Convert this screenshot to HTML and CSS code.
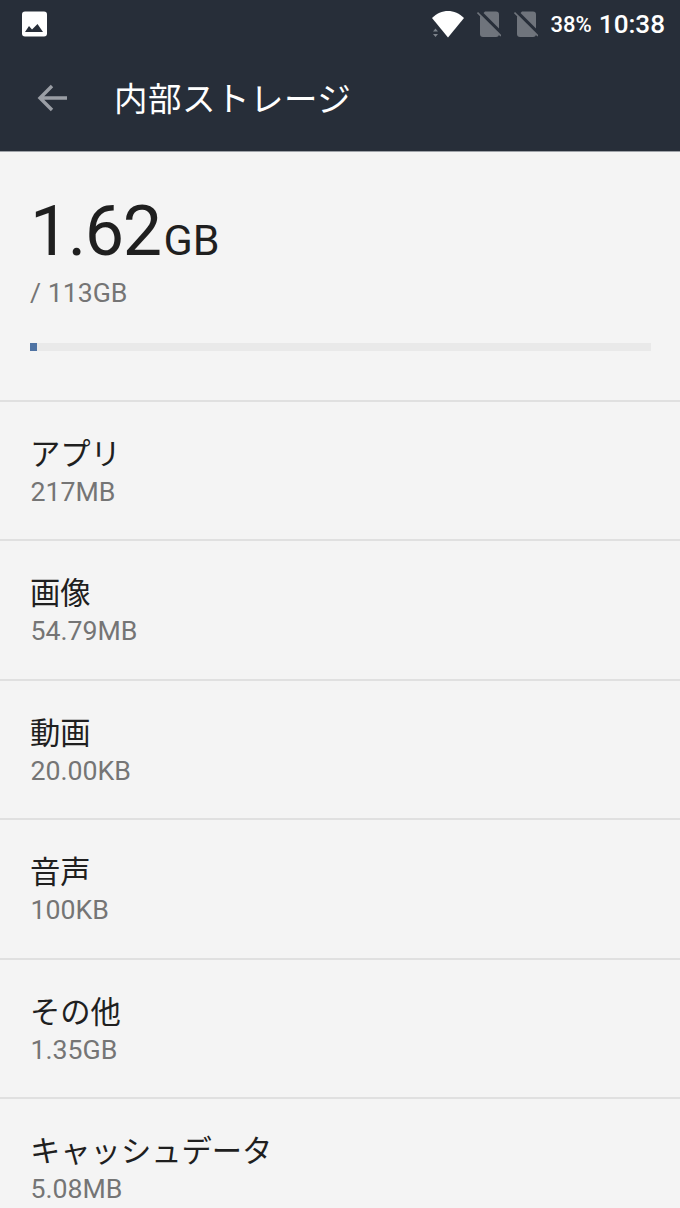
FILE: index.html
```html
<!DOCTYPE html>
<html lang="ja">
<head>
  <meta charset="UTF-8" />
  <meta name="viewport" content="width=device-width, initial-scale=1.0"/>
  <title>内部ストレージ</title>
  <link rel="stylesheet" href="styles.css">
</head>
<body>
  <div class="header">
    <div class="status-bar">
      <svg class="status-photo" width="25" height="26" viewBox="0 0 25 26">
        <rect x="0" y="0.5" width="25" height="25" rx="3" fill="#fff"/>
        <path d="M3 21 L7 15 L10 18.5 L15.5 13 L21 21 Z" fill="#272e39"/>
      </svg>
      <div class="status-right">
        <svg class="status-wifi" width="34" height="28" viewBox="0 0 34 28">
          <path d="M1 8 C10 -1.5 24 -1.5 33 8 L17 27.5 Z" fill="#fff"/>
          <path d="M2 21.5 L4.5 18.5 L7 21.5 Z M2 24 L7 24 L4.5 27 Z" fill="#7d838b"/>
        </svg>
        <svg class="status-sim" width="24" height="28" viewBox="0 0 24 28">
          <path d="M8 1.5 H19 Q22 1.5 22 4.5 V24 Q22 27 19 27 H6 Q3 27 3 24 V6.5 Z" fill="#6f747c"/>
          <path d="M2 1 L26 25" stroke="#272e39" stroke-width="3.5"/>
          <path d="M0.5 2.5 L24 26" stroke="#6f747c" stroke-width="1.6"/>
        </svg>
        <svg class="status-sim" width="24" height="28" viewBox="0 0 24 28">
          <path d="M8 1.5 H19 Q22 1.5 22 4.5 V24 Q22 27 19 27 H6 Q3 27 3 24 V6.5 Z" fill="#6f747c"/>
          <path d="M2 1 L26 25" stroke="#272e39" stroke-width="3.5"/>
          <path d="M0.5 2.5 L24 26" stroke="#6f747c" stroke-width="1.6"/>
        </svg>
        <span class="status-battery">38%</span>
        <span class="status-time">10:38</span>
      </div>
    </div>
    <div class="toolbar">
      <svg class="back" width="32" height="30" viewBox="0 0 32 30">
        <path d="M30 15 H3 M15 3 L3 15 L15 27" fill="none" stroke="#9a9ea5" stroke-width="3.4"/>
      </svg>
      <h1>内部ストレージ</h1>
    </div>
  </div>

  <div class="summary">
    <div class="used"><span class="used-num">1.62</span><span class="used-unit">GB</span></div>
    <div class="total">/ 113GB</div>
    <div class="bar"><div class="bar-fill" style="width: 1.1%"></div></div>
  </div>

  <div class="list">
    <div class="row"><div class="row-title">アプリ</div><div class="row-size">217MB</div></div>
    <div class="row"><div class="row-title">画像</div><div class="row-size">54.79MB</div></div>
    <div class="row"><div class="row-title">動画</div><div class="row-size">20.00KB</div></div>
    <div class="row"><div class="row-title">音声</div><div class="row-size">100KB</div></div>
    <div class="row"><div class="row-title">その他</div><div class="row-size">1.35GB</div></div>
    <div class="row"><div class="row-title">キャッシュデータ</div><div class="row-size">5.08MB</div></div>
  </div>
</body>
</html>
```

FILE: styles.css
```css
html, body {
  height: 100%;
}
body {
  margin: 0;
  overflow: hidden;
  background: #f4f4f4;
  color: #1f1f1f;
  font-family: Roboto, "Noto Sans CJK JP", sans-serif;
}
.header {
  height: 151px;
  background: #272e39;
  border-bottom: 1px solid #9ea2a8;
  color: white;
}
.status-bar {
  display: flex;
  justify-content: space-between;
  align-items: center;
  height: 48px;
  padding: 0 15px 0 22px;
}
.status-right {
  display: flex;
  align-items: center;
}
.status-wifi {
  margin-right: 12px;
}
.status-sim {
  margin-right: 13px;
}
.status-battery {
  margin-right: 7px;
  font-size: 22px;
  font-weight: 500;
}
.status-time {
  font-size: 26.1px;
  font-weight: 500;
}
.toolbar {
  display: flex;
  align-items: center;
  height: 100px;
  padding-left: 37px;
}
.back {
  margin-right: 45px;
}
.toolbar h1 {
  margin: -3px 0 0;
  font-size: 33.5px;
  font-weight: 400;
  letter-spacing: 0.5px;
}
.summary {
  height: 248px;
  padding: 0 29px 0 30px;
  box-sizing: border-box;
}
.used {
  padding-top: 37px;
  line-height: 84px;
}
.used-num {
  font-size: 70px;
  letter-spacing: -1.5px;
}
.used-unit {
  font-size: 43px;
  margin-left: 3px;
}
.total {
  margin-top: -17px;
  font-size: 26.7px;
  line-height: 36px;
  color: #757575;
}
.bar {
  margin-top: 32px;
  height: 8px;
  background: #e9e9e9;
}
.bar-fill {
  height: 8px;
  background: #4f73a3;
}
.row {
  box-sizing: border-box;
  height: 139.4px;
  padding: 32px 30px 0 30px;
  border-top: 2px solid #e0e0e0;
}
.row-title {
  font-size: 30.3px;
  line-height: 42px;
}
.row-size {
  padding-left: 0.5px;
  font-size: 26.7px;
  line-height: 32px;
  color: #757575;
}
```
